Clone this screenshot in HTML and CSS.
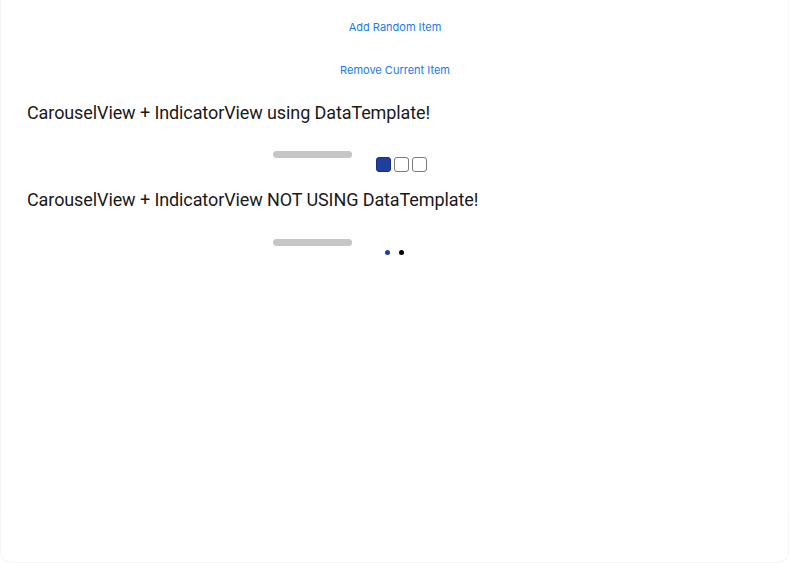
FILE: index.html
```html
<!DOCTYPE html>
<html>
<head>
<meta charset="utf-8">
<link rel="stylesheet" href="styles.css">
</head>
<body>
<div class="window">
  <div class="actions">
    <button class="link">Add Random Item</button>
    <button class="link">Remove Current Item</button>
  </div>
  <h2 class="title t1">CarouselView + IndicatorView using DataTemplate!</h2>
  <div class="carousel-row">
    <div class="bar"></div>
    <div class="squares">
      <span class="sq active"></span><span class="sq"></span><span class="sq"></span>
    </div>
  </div>
  <h2 class="title t2">CarouselView + IndicatorView NOT USING DataTemplate!</h2>
  <div class="carousel-row row2">
    <div class="bar"></div>
    <div class="dots">
      <span class="dot active"></span><span class="dot"></span>
    </div>
  </div>
</div>
</body>
</html>
```
FILE: styles.css
```css
html, body { margin: 0; padding: 0; background: #fff; }
body { font-family: Inter, "Noto Sans", sans-serif; }
.window {
  width: 789px;
  height: 563px;
  box-sizing: border-box;
  border-radius: 0 0 11px 11px;
  border: 1px solid rgba(0,0,0,0.04);
  border-top: 0;
  overflow: hidden;
}
.actions {
  display: flex;
  flex-direction: column;
  align-items: center;
  padding-top: 20px;
  gap: 28px;
}
.link {
  background: none;
  border: 0;
  padding: 0;
  font-family: Inter, sans-serif;
  font-size: 11px;
  line-height: 15px;
  color: #1a78f2;
  margin-left: 1px;
}
.title {
  margin: 0;
  padding-left: 26px;
  font-family: Roboto, sans-serif;
  font-weight: 400;
  font-size: 18px;
  line-height: 24px;
  letter-spacing: -0.1px;
  color: #1a1a1a;
}
.t1 { margin-top: 23px; }
.t2 { margin-top: 1px; }
.carousel-row {
  display: flex;
  align-items: flex-start;
  padding-left: 272px;
  margin-top: 26px;
  height: 36px;
}
.bar {
  width: 79px;
  height: 7px;
  border-radius: 4px;
  background: #c6c6c6;
}
.squares {
  display: flex;
  gap: 3px;
  margin-left: 24px;
  margin-top: 6px;
}
.sq {
  width: 13px;
  height: 13px;
  border: 1px solid #7a7a7a;
  border-radius: 3px;
  background: #fff;
}
.sq.active { background: #1f3ea1; border-color: #16307e; }
.row2 { margin-top: 27px; }
.dots {
  display: flex;
  gap: 9px;
  margin-left: 33px;
  margin-top: 11px;
}
.dot {
  width: 5px;
  height: 5px;
  border-radius: 50%;
  background: #000;
}
.dot.active { background: #1f3ea1; }
```
